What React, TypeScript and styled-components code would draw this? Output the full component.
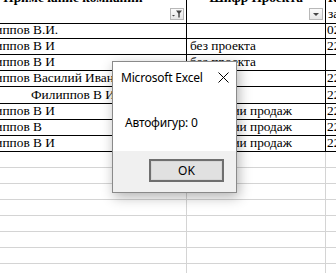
import React from "react";
import styled, { createGlobalStyle } from "styled-components";

const Global = createGlobalStyle`
  html, body { margin: 0; padding: 0; background: #ffffff; overflow: hidden; }
  #root { width: 336px; height: 273px; }
`;

const Screen = styled.div`
  position: relative;
  width: 336px;
  height: 273px;
  overflow: hidden;
  background: #ffffff;
`;

const Sheet = styled.div`
  display: grid;
  grid-template-columns: 227px 139px 120px;
  margin-left: -40px;
  margin-top: -16px;
  font-family: "Liberation Serif", "Times New Roman", serif;
  font-size: 13.33px;
  color: #000;
`;

const Cell = styled.div<{ $h: number; $grid?: boolean; $align?: string; $pad?: number }>`
  position: relative;
  box-sizing: border-box;
  height: ${(p) => p.$h}px;
  border-right: 1px solid ${(p) => (p.$grid ? "#d4d4d4" : "#000")};
  border-bottom: 1px solid ${(p) => (p.$grid ? "#d4d4d4" : "#000")};
  display: flex;
  align-items: flex-end;
  justify-content: ${(p) => p.$align || "flex-start"};
  padding: 0 0 1px ${(p) => p.$pad ?? 3}px;
  line-height: 14px;
  white-space: nowrap;
  overflow: hidden;
`;

const HeadCell = styled.div<{ $align?: string }>`
  position: relative;
  box-sizing: border-box;
  height: 40px;
  border-right: 1px solid #000;
  border-bottom: 1px solid #000;
  padding: 6px 2px 0 2px;
  font-weight: bold;
  line-height: 16px;
  text-align: ${(p) => p.$align || "center"};
  white-space: nowrap;
  overflow: hidden;
`;

const HeadSub = styled.div`
  font-weight: normal;
`;

const FilterBtn = styled.div`
  position: absolute;
  right: 2px;
  bottom: 3px;
  width: 14px;
  height: 12px;
  box-sizing: border-box;
  border: 1px solid #b8b8b8;
  background: linear-gradient(#fbfbfb, #e6e6e6);
  display: flex;
  align-items: center;
  justify-content: center;
`;

const Dialog = styled.div`
  position: absolute;
  left: 112px;
  top: 61px;
  width: 125px;
  height: 132px;
  box-sizing: border-box;
  border: 1px solid #8a8a8a;
  background: #ffffff;
  box-shadow: 2px 4px 12px rgba(0, 0, 0, 0.3);
  display: flex;
  flex-direction: column;
  font-family: "Noto Sans", "Open Sans", sans-serif;
  font-size: 12px;
  color: #000;
`;

const TitleBar = styled.div`
  height: 30px;
  display: flex;
  align-items: center;
  justify-content: space-between;
  padding: 0 7px 0 8px;
`;

const Title = styled.span`
  font-size: 12px;
  letter-spacing: -0.2px;
`;

const Body = styled.div`
  flex: 1;
  padding: 22px 0 0 12px;
  letter-spacing: -0.2px;
`;

const Footer = styled.div`
  height: 41px;
  background: #f0f0f0;
  display: flex;
  justify-content: flex-end;
  align-items: flex-start;
  padding: 8px 12px 0 0;
  box-sizing: border-box;
`;

const Button = styled.button`
  width: 75px;
  height: 23px;
  box-sizing: border-box;
  border: 2px solid #6f6f6f;
  background: #e1e1e1;
  font-family: "Noto Sans", "Open Sans", sans-serif;
  font-size: 12px;
  color: #000;
  padding: 0;
  box-shadow: inset 0 0 0 1px #d6d6d6;
`;

const FunnelIcon = () => (
  <svg width="12" height="10" viewBox="0 0 12 10">
    <path d="M1 6 L4 6 L2.5 7.5 Z" fill="#444" />
    <path d="M5 1.5 H11 L8.7 4.5 V8.5 L7.3 8.5 V4.5 Z" fill="#444" />
  </svg>
);

const DropIcon = () => (
  <svg width="10" height="8" viewBox="0 0 10 8">
    <path d="M2 3 H8 L5 6 Z" fill="#444" />
  </svg>
);

const CloseIcon = () => (
  <svg width="11" height="11" viewBox="0 0 11 11">
    <path d="M0.5 0.5 L10.5 10.5 M10.5 0.5 L0.5 10.5" stroke="#000" strokeWidth="1" />
  </svg>
);

type Row = { h: number; a: string; center?: boolean; b: string; c: string };

const rows: Row[] = [
  { h: 15, a: "Филиппов В.И.", b: "", c: "02.03.2017" },
  { h: 16, a: "Филиппов В И", b: "без проекта", c: "22.12.2017" },
  { h: 16, a: "Филиппов В И", b: "без проекта", c: "" },
  { h: 16, a: "Филиппов Василий Иванович", b: "", c: "22.12.2017" },
  { h: 17, a: "Филиппов В И", center: true, b: "", c: "22.12.2017" },
  { h: 16, a: "Филиппов В И", b: "Дирекции продаж", c: "22.12.2017" },
  { h: 16, a: "Филиппов В", b: "Дирекции продаж", c: "22.12.2017" },
  { h: 16, a: "Филиппов В И", b: "Дирекции продаж", c: "22.12.2017" },
];

export default function App() {
  return (
    <Screen>
      <Global />
      <Sheet>
        <HeadCell>
          Примечание компании
          <FilterBtn>
            <FunnelIcon />
          </FilterBtn>
        </HeadCell>
        <HeadCell>
          Шифр Проекта
          <FilterBtn>
            <DropIcon />
          </FilterBtn>
        </HeadCell>
        <HeadCell $align="left">
          Код
          <HeadSub>заказа</HeadSub>
        </HeadCell>
        {rows.map((r, i) => (
          <React.Fragment key={i}>
            <Cell $h={r.h} $align={r.center ? "center" : "flex-start"} $pad={r.center ? 0 : 11}>
              {r.a}
            </Cell>
            <Cell $h={r.h}>{r.b}</Cell>
            <Cell $h={r.h} $pad={1}>{r.c}</Cell>
          </React.Fragment>
        ))}
        {Array.from({ length: 8 }).map((_, i) => (
          <React.Fragment key={"g" + i}>
            <Cell $h={16} $grid />
            <Cell $h={16} $grid />
            <Cell $h={16} $grid />
          </React.Fragment>
        ))}
      </Sheet>
      <Dialog>
        <TitleBar>
          <Title>Microsoft Excel</Title>
          <CloseIcon />
        </TitleBar>
        <Body>Автофигур: 0</Body>
        <Footer>
          <Button>OK</Button>
        </Footer>
      </Dialog>
    </Screen>
  );
}
